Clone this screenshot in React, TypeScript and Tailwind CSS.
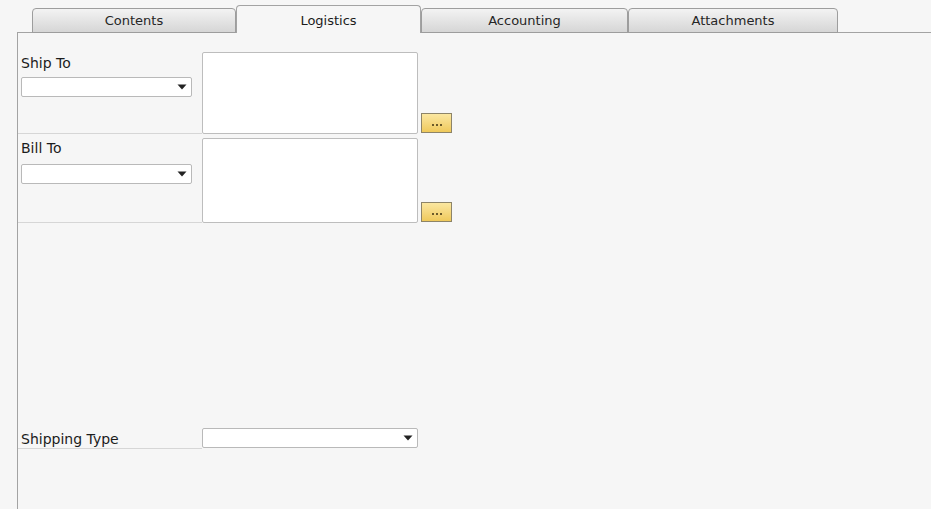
import React from 'react';

const tabs = [
  { label: 'Contents', width: 'w-[204px]' },
  { label: 'Logistics', width: 'w-[185px]', active: true },
  { label: 'Accounting', width: 'w-[207px]' },
  { label: 'Attachments', width: 'w-[210px]' },
];

const Caret: React.FC = () => (
  <svg width="10" height="6" viewBox="0 0 10 6" className="shrink-0">
    <path d="M0.5 0.5 L9.5 0.5 L5 5.5 Z" fill="#222" />
  </svg>
);

const Combo: React.FC<{ className?: string }> = ({ className = '' }) => (
  <div
    className={`h-[20px] bg-white border border-[#b9b9b9] rounded-[2px] flex items-center justify-end pr-[4px] ${className}`}
  >
    <Caret />
  </div>
);

const MoreButton: React.FC = () => (
  <div className="w-[31px] h-[20px] border border-[#8d8468] bg-gradient-to-b from-[#fbe7a0] to-[#efc95a] flex items-center justify-center gap-[2px] pt-[4px]">
    <span className="w-[2px] h-[2px] bg-[#6b5a2a]" />
    <span className="w-[2px] h-[2px] bg-[#6b5a2a]" />
    <span className="w-[2px] h-[2px] bg-[#6b5a2a]" />
  </div>
);

const AddressRow: React.FC<{ label: string; labelGap: string; comboGap: string; height: string }> = ({
  label,
  labelGap,
  comboGap,
  height,
}) => (
  <div className={`flex items-stretch ${height}`}>
    <div className="w-[184px] border-b border-[#d6d6d6] pl-[3px] pr-[10px]">
      <div className={`${labelGap} leading-[16px]`}>{label}</div>
      <Combo className={`${comboGap} w-[171px]`} />
    </div>
    <div className="w-[216px] bg-white border border-[#bdbdbd] rounded-[2px]" />
    <div className="flex items-end pl-[3px] pb-[1px]">
      <MoreButton />
    </div>
  </div>
);

export default function App() {
  return (
    <div
      className="w-[931px] h-[509px] overflow-hidden bg-[#f6f6f6] text-[#1c1c1c] text-[14px]"
      style={{ fontFamily: '"DejaVu Sans", Verdana, sans-serif' }}
    >
      {/* tab strip */}
      <div className="relative z-10 flex items-end h-[33px] -mb-px pl-[32px]">
        {tabs.map((t) =>
          t.active ? (
            <div
              key={t.label}
              className={`${t.width} h-[28px] bg-[#f6f6f6] border border-b-0 border-[#a3a3a3] rounded-t-[4px] flex items-center justify-center pt-[3px] text-[13px]`}
            >
              {t.label}
            </div>
          ) : (
            <div
              key={t.label}
              className={`${t.width} h-[25px] bg-gradient-to-b from-[#f3f3f3] to-[#d6d6d6] border border-[#9d9d9d] rounded-t-[4px] flex items-center justify-center text-[13px] text-[#262626]`}
            >
              {t.label}
            </div>
          )
        )}
      </div>

      {/* panel */}
      <div className="ml-[17px] h-[477px] border-l border-t border-[#a3a3a3]">
        <div className="pt-[19px] flex flex-col gap-[4px]">
          <AddressRow label="Ship To" labelGap="mt-[3px]" comboGap="mt-[6px]" height="h-[82px]" />
          <AddressRow label="Bill To" labelGap="mt-[2px]" comboGap="mt-[8px]" height="h-[85px]" />
        </div>

        <div className="mt-[205px] flex items-stretch h-[21px]">
          <div className="w-[184px] border-b border-[#d6d6d6] pl-[3px] flex items-end leading-[18px]">
            Shipping Type
          </div>
          <Combo className="w-[216px]" />
        </div>
      </div>
    </div>
  );
}
